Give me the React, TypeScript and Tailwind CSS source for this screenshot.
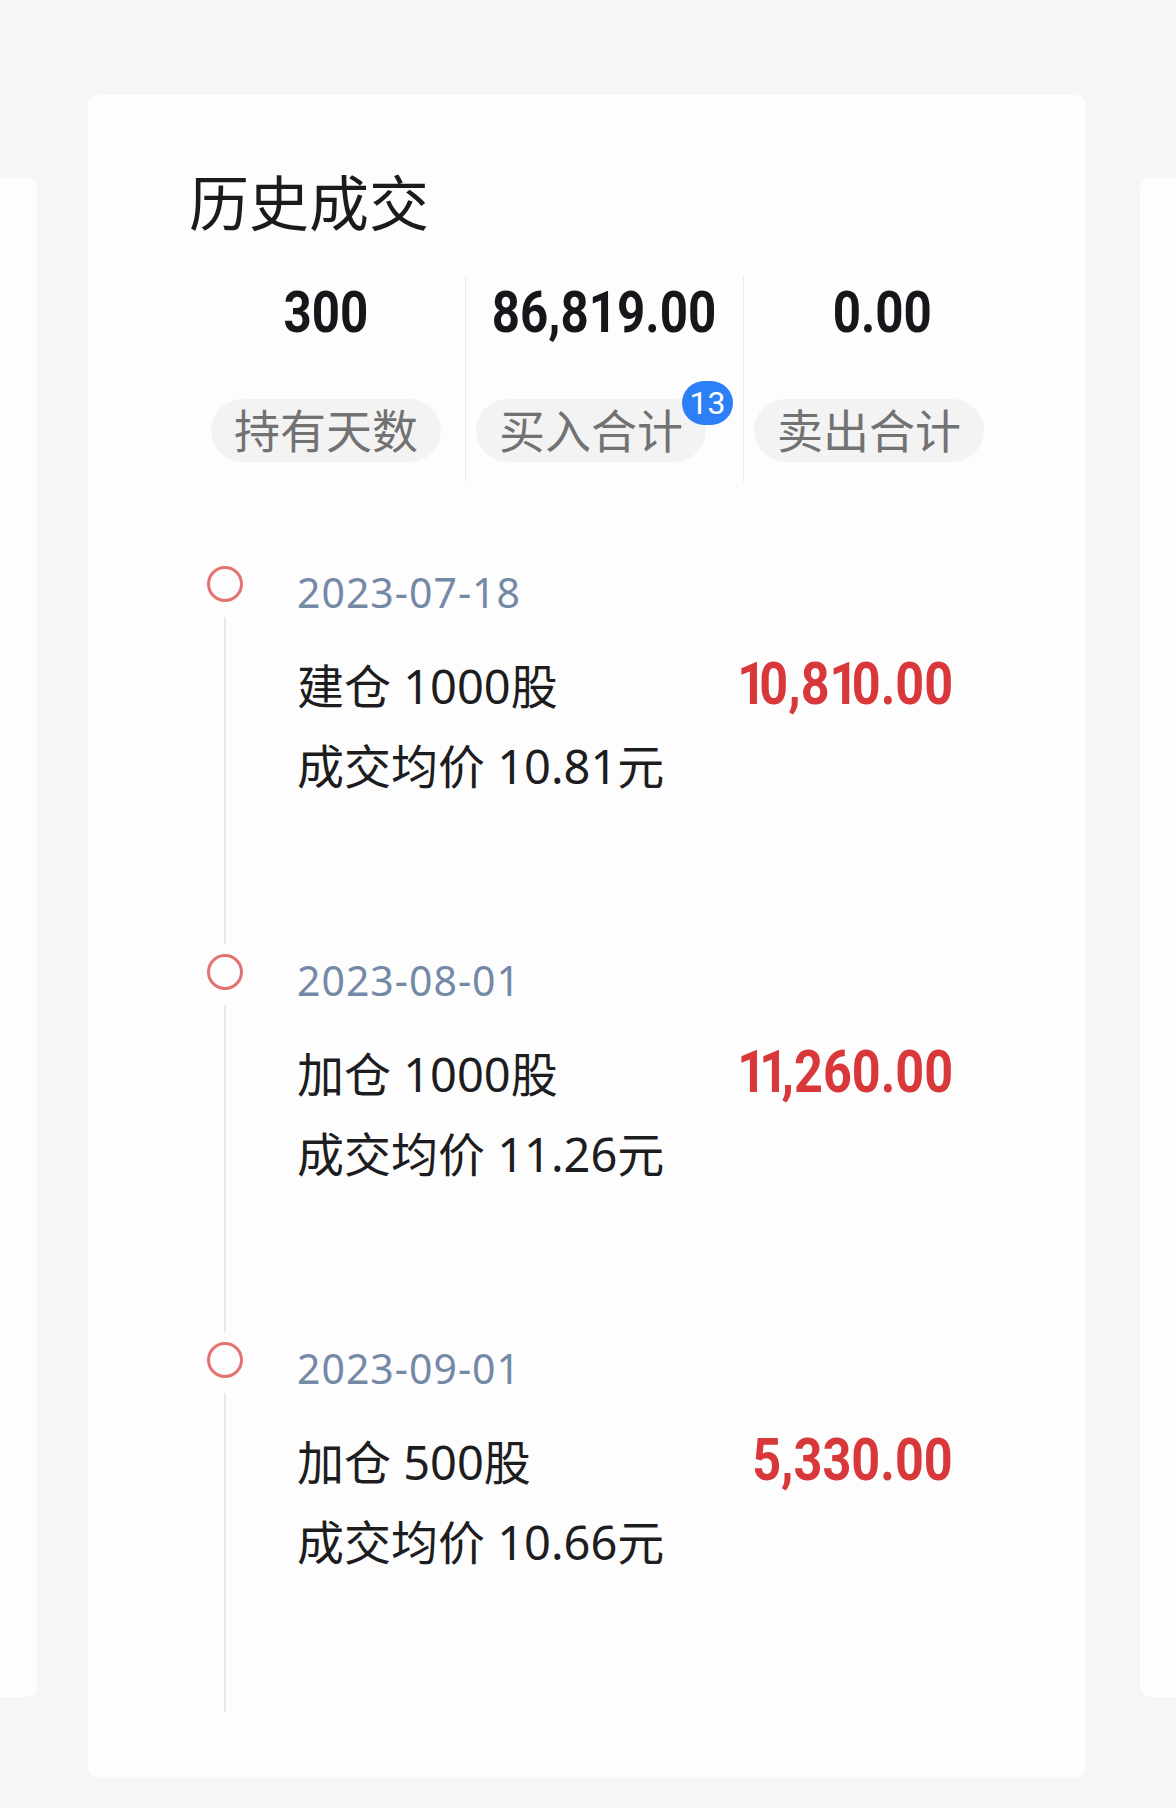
import React from "react";

const cjk = "font-['Noto_Sans','Noto_Sans_CJK_SC',sans-serif]";
const num = "font-['Roboto','Noto_Sans_CJK_SC',sans-serif]";

const stats = [
  { value: "300", label: "持有天数", badge: "", shift: false },
  { value: "86,819.00", label: "买入合计", badge: "13", shift: true },
  { value: "0.00", label: "卖出合计", badge: "", shift: true },
];

const trades = [
  { date: "2023-07-18", action: "建仓 1000股", price: "成交均价 10.81元", amount: "10,810.00" },
  { date: "2023-08-01", action: "加仓 1000股", price: "成交均价 11.26元", amount: "11,260.00" },
  { date: "2023-09-01", action: "加仓 500股", price: "成交均价 10.66元", amount: "5,330.00" },
];

// the "1" in the amount font is narrow, Roboto's is not
function Amount({ value }: { value: string }) {
  const parts = value.split(/(1)/).filter(Boolean);
  return (
    <>
      {parts.map((p, i) =>
        p === "1" ? (
          <span key={i} className="tracking-[-8px]">
            1
          </span>
        ) : (
          <span key={i}>{p}</span>
        )
      )}
    </>
  );
}

function StatColumn({ stat, first }: { stat: (typeof stats)[number]; first: boolean }) {
  return (
    <div
      className={`flex flex-col items-center pt-[7px] pb-[20px] ${
        first ? "" : "border-l border-[#ececec]"
      }`}
    >
      <span
        className={`${num} inline-block scale-x-[0.85] text-[58px] leading-[58px] font-bold text-[#15171b]`}
      >
        {stat.value}
      </span>
      <div className={`relative mt-[58px] ${stat.shift ? "pr-[27px]" : ""}`}>
        <div
          className={`${cjk} h-[63px] rounded-full bg-[#f3f3f4] px-[23px] text-[46px] leading-[63px] text-[#727272]`}
        >
          {stat.label}
        </div>
        {stat.badge && (
          <span
            className={`${num} absolute right-0 top-[-18px] flex h-[44px] w-[51px] items-center justify-center rounded-full bg-[#2d7ff7] text-[32px] text-white`}
          >
            {stat.badge}
          </span>
        )}
      </div>
    </div>
  );
}

function TradeItem({ trade, last }: { trade: (typeof trades)[number]; last: boolean }) {
  return (
    <div className={`flex ${last ? "h-[380px]" : "h-[388px]"}`}>
      <div className="flex w-[36px] flex-col items-center">
        <div className="h-[36px] w-[36px] shrink-0 rounded-full border-[3.5px] border-[#e47272]" />
        <div className="mt-[15px] mb-[10px] w-[2px] flex-1 bg-[#e8e8e8]" />
      </div>
      <div className="ml-[54px] flex-1">
        <div className={`${cjk} mt-[6px] text-[41px] leading-[41px] tracking-[1px] text-[#7389a6]`}>
          {trade.date}
        </div>
        <div className="mt-[48px] flex items-baseline justify-between">
          <span className={`${cjk} text-[47px] leading-[46px] text-[#1d1d1f]`}>{trade.action}</span>
          <span
            className={`${num} inline-block origin-right scale-x-[0.84] text-[60px] leading-[46px] font-bold text-[#d9383b]`}
          >
            <Amount value={trade.amount} />
          </span>
        </div>
        <div className={`${cjk} mt-[34px] text-[47px] leading-[46px] text-[#1d1d1f]`}>
          {trade.price}
        </div>
      </div>
    </div>
  );
}

export default function App() {
  return (
    <div className="flex min-h-[1808px] w-[1176px] items-start overflow-hidden bg-[#f6f6f7]">
      <div className="mt-[178px] h-[1519px] w-[37px] shrink-0 rounded-r-[10px] bg-[#fdfdfd]" />
      <section className="mt-[95px] ml-[51px] h-[1683px] w-[998px] shrink-0 rounded-[10px] bg-[#fdfdfd] pt-[78px]">
        <h2 className={`${cjk} pl-[101px] text-[60px] leading-[60px] font-normal text-[#1b1b1d]`}>
          历史成交
        </h2>
        <div className="mt-[43px] ml-[99px] grid w-[834px] grid-cols-3">
          {stats.map((s, idx) => (
            <StatColumn key={idx} stat={s} first={idx === 0} />
          ))}
        </div>
        <div className="mt-[84px] ml-[119px] mr-[133px]">
          {trades.map((t, idx) => (
            <TradeItem key={idx} trade={t} last={idx === trades.length - 1} />
          ))}
        </div>
      </section>
      <div className="mt-[178px] ml-[54px] h-[1519px] w-[36px] shrink-0 rounded-l-[10px] bg-[#fdfdfd]" />
    </div>
  );
}
